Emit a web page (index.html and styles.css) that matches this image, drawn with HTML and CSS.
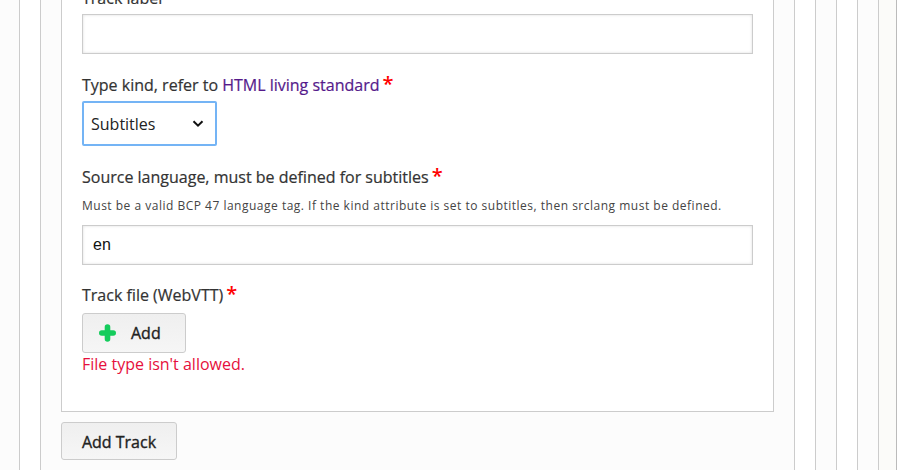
FILE: index.html
```html
<!DOCTYPE html>
<html lang="en">
<head>
<meta charset="utf-8">
<title>Track</title>
<link rel="stylesheet" href="styles.css">
</head>
<body>
<div class="page">
<div class="nest n1"><div class="nest n2"><div class="nest n3"><div class="nest n4"><div class="nest n5"><div class="nest n6">
  <div class="track">
    <div class="field first">
      <label class="label">Track label</label>
      <input class="text" type="text">
    </div>
    <div class="field kind">
      <label class="label">Type kind, refer to <a class="link" href="#">HTML living standard</a><span class="req">*</span></label>
      <div class="select" tabindex="0">
        <span>Subtitles</span>
        <svg class="chev" width="12" height="8" viewBox="0 0 12 8"><path d="M1.500 1.200 6 5.700l4.500-4.500" fill="none" stroke="#111" stroke-width="2"/></svg>
      </div>
    </div>
    <div class="field lang">
      <label class="label">Source language, must be defined for subtitles<span class="req">*</span></label>
      <p class="hint">Must be a valid BCP 47 language tag. If the kind attribute is set to subtitles, then srclang must be defined.</p>
      <input class="text" type="text" value="en">
    </div>
    <div class="field file">
      <label class="label">Track file (WebVTT)<span class="req">*</span></label>
      <button class="btn add" type="button">
        <svg width="17" height="18" viewBox="0 0 17 18"><path d="M8.500 3v12M2.800 9h11.400" fill="none" stroke="#14cc5c" stroke-width="5.600" stroke-linecap="round"/></svg>
        Add
      </button>
      <p class="error">File type isn't allowed.</p>
    </div>
  </div>
  <button class="btn addtrack" type="button">Add Track</button>
</div></div></div></div></div></div>
</div>
</body>
</html>
```
FILE: styles.css
```css
html, body { margin: 0; padding: 0; height: 100%; overflow: hidden; background: #fff; }
body { font-family: "Open Sans", sans-serif; color: #333; }
.page { width: 919px; height: 470px; overflow: hidden; }
.nest { border: 1px solid #ccc; border-width: 0 1px 0 1px; padding: 0 20px; box-sizing: border-box; height: 492px; }
.n1 { margin-left: -65px; width: 962px; background: #fbfbf9; border-right-color: #bbb; padding-right: 17px; }
.n2 { background: #fcfcfc; width: 923px; }
.n3 { background: #fff; }
.n4 { background: #fcfcfc; }
.n5 { background: #fff; }
.n6 { background: #fcfcfc; }
.track { background: #fff; border: 1px solid #ccc; border-top: 0; padding: 9px 20px 0; height: 434px; box-sizing: border-box; margin: -22px 0 10px; }
.field { display: flex; flex-direction: column; align-items: flex-start; }
.label { font-size: 16px; line-height: 22px; font-weight: 400; color: #333; -webkit-text-stroke: .2px #333; }
.link { color: #551a8b; -webkit-text-stroke: .2px #551a8b; text-decoration: none; }
.req { color: #f00; -webkit-text-stroke: 0; font-size: 20px; font-weight: 600; line-height: 16px; margin-left: 3px; vertical-align: 0; }
.text { display: block; width: 100%; height: 40px; box-sizing: border-box; border: 1px solid #ccc; background: #fff; box-shadow: inset 0 0 3px #ddd; padding: 0 10px; font: 16px "Liberation Sans", sans-serif; color: #111; outline: 0; margin: 0; }
.first .text { margin-top: 5px; }
.kind { margin-top: 20px; }
.select { margin-top: 5px; width: 135px; height: 45px; box-sizing: border-box; border: 2px solid #74b4f5; border-radius: 2px; padding: 0 11px 0 7px; display: flex; align-items: center; justify-content: space-between; font-size: 16px; color: #222; background: #fff; }
.lang { margin-top: 20px; }
.hint { margin: 10px 0 11px; font-size: 12px; line-height: 16px; letter-spacing: .5px; color: #444; }
.file { margin-top: 19px; }
.btn { font-family: "Open Sans", sans-serif; font-size: 16px; font-weight: 500; color: #222; -webkit-text-stroke: .35px #222; border: 1px solid #ccc; border-radius: 3px; background: linear-gradient(#efefef, #f6f6f6); margin: 0; }
.add { display: flex; align-items: center; gap: 15px; width: 104px; height: 40px; margin-top: 7px; padding: 0 0 0 16px; }
.error { margin: 0; font-size: 16px; line-height: 22px; color: #e6103c; }
.addtrack { display: block; width: 116px; height: 38px; padding: 2px 0 0; }
```
